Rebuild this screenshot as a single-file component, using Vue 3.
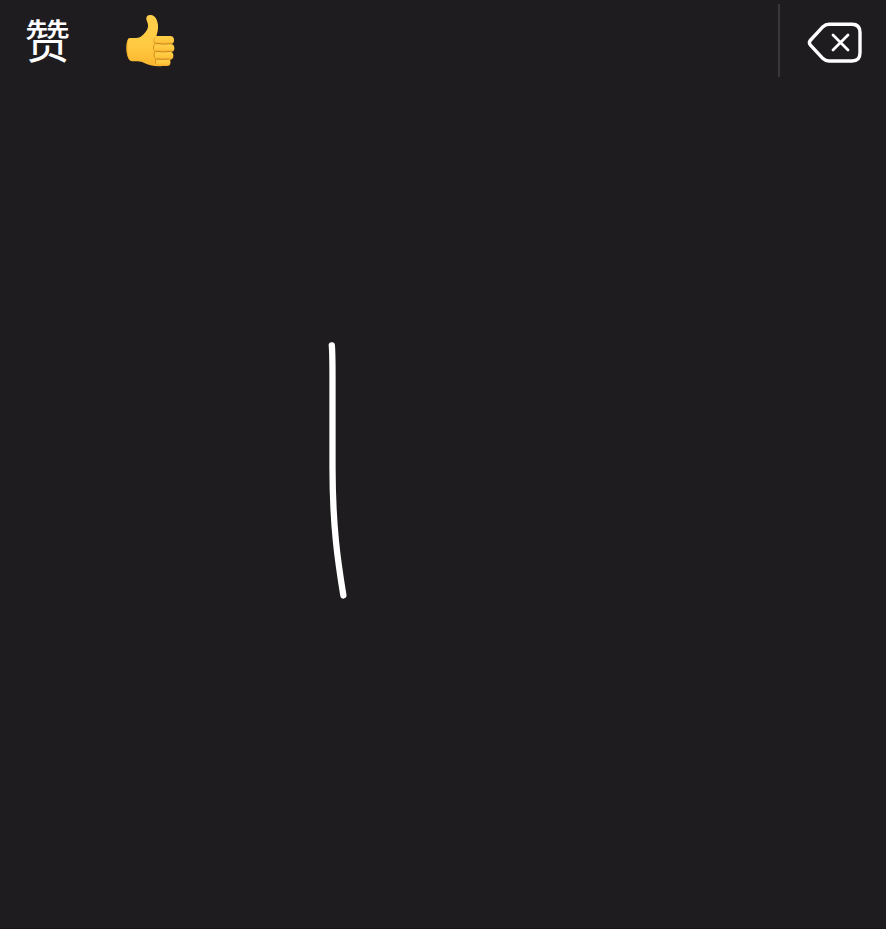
<script setup>
const strokes = ['M331.8 345.3C332.5 353 332.5 364 332.5 378V468C332.6 526 337.7 561 343.4 595.5']
</script>

<template>
  <main class="handwriting">
    <header class="bar">
      <div class="candidates">
        <button class="candidate word" lang="zh-CN">赞</button>
        <button class="candidate" aria-label="👍">
          <svg class="thumb" viewBox="0 0 210 210" width="70" height="70">
            <defs>
              <linearGradient id="skin" x1="0" y1="0" x2="0" y2="1">
                <stop offset="0" stop-color="#ffd04c" />
                <stop offset=".6" stop-color="#ffca42" />
                <stop offset="1" stop-color="#fab62e" />
              </linearGradient>
              <linearGradient id="finger" x1="0" y1="0" x2="0" y2="1">
                <stop offset="0" stop-color="#ffcf49" />
                <stop offset=".65" stop-color="#ffc63d" />
                <stop offset="1" stop-color="#f3aa29" />
              </linearGradient>
            </defs>
            <path fill="url(#skin)" d="M41 100C52 97 66 101 76 96C88 88 97 77 99 66C101 54 93 47 94 39C95 30 103 28 112 31C123 35 128 50 129 61C130 73 127 84 124 92L145 98L147 182C126 186 102 182 88 174C76 166 62 172 46 167C33 160 30 111 41 100Z" />
            <path fill="#f0a426" opacity=".6" d="M41 101C37 115 36 153 46 166C34 161 30 112 41 101Z" />
            <path fill="none" stroke="#d18a20" stroke-width="3" stroke-linecap="round" d="M124 94C116 99 115 109 120 116C114 123 114 133 120 139C115 146 117 156 123 162C119 169 121 177 128 181" />
            <path fill="#e39b25" d="M123 106H166V174H127Z" />
            <rect x="118" y="93" width="59" height="25" rx="12" fill="url(#finger)" />
            <rect x="118" y="117" width="60" height="24" rx="11.5" fill="url(#finger)" />
            <rect x="120" y="140" width="55" height="24" rx="11" fill="url(#finger)" />
            <rect x="123" y="163" width="43" height="20" rx="9.5" fill="url(#finger)" />
            <path fill="none" stroke="#bd7b20" stroke-width="2.4" stroke-linecap="round" d="M122 115Q141 120 169 116M123 139Q144 143 167 139M126 162Q142 165 161 162" />
          </svg>
        </button>
      </div>
      <button class="delete" aria-label="Delete">
        <svg viewBox="0 0 56 42" width="56" height="42" fill="none" stroke="#fff" stroke-linecap="round" stroke-linejoin="round">
          <path stroke-width="3.4" d="M22 2.3H45Q53 2.3 53 10.5V30.8Q53 39 45 39H22Q18.5 39 16 36.6L3.2 22.8Q1.6 20.7 3.2 18.5L16 4.7Q18.5 2.3 22 2.3Z" />
          <path stroke-width="2.8" d="M26 13L41 28M41 13L26 28" />
        </svg>
      </button>
    </header>
    <svg class="canvas" viewBox="0 80 886 849">
      <path v-for="stroke in strokes" :key="stroke" :d="stroke" />
    </svg>
  </main>
</template>

<style>
body {
  margin: 0;
  background: #1e1c1f;
}
</style>

<style scoped>
.handwriting {
  box-sizing: border-box;
  display: flex;
  flex-direction: column;
  width: 886px;
  height: 929px;
  overflow: hidden;
  background: #1e1c1f;
  color: #fff;
  font-family: "Noto Sans CJK SC", sans-serif;
  border-bottom: 1px solid #1b151a;
}
button {
  margin: 0;
  padding: 0;
  border: 0;
  background: none;
  color: inherit;
  font: inherit;
}
.bar {
  display: flex;
  flex: none;
  justify-content: space-between;
  box-sizing: border-box;
  height: 80px;
  padding: 4px 0;
}
.candidates {
  display: flex;
  align-items: flex-start;
  gap: 44px;
  padding: 1px 0 0 24px;
}
.word {
  width: 47px;
  height: 66px;
  font-size: 46px;
  line-height: 66px;
}
.thumb {
  display: block;
}
.delete {
  display: flex;
  box-sizing: border-box;
  width: 108px;
  height: 73px;
  padding: 18px 0 0 27px;
  border-left: 2px solid #39373a;
}
.delete svg {
  flex: none;
  overflow: visible;
}
.canvas {
  display: block;
  flex: none;
  width: 886px;
  height: 849px;
}
.canvas path {
  fill: none;
  stroke: #fff;
  stroke-width: 6.3;
  stroke-linecap: round;
  stroke-linejoin: round;
}
</style>
